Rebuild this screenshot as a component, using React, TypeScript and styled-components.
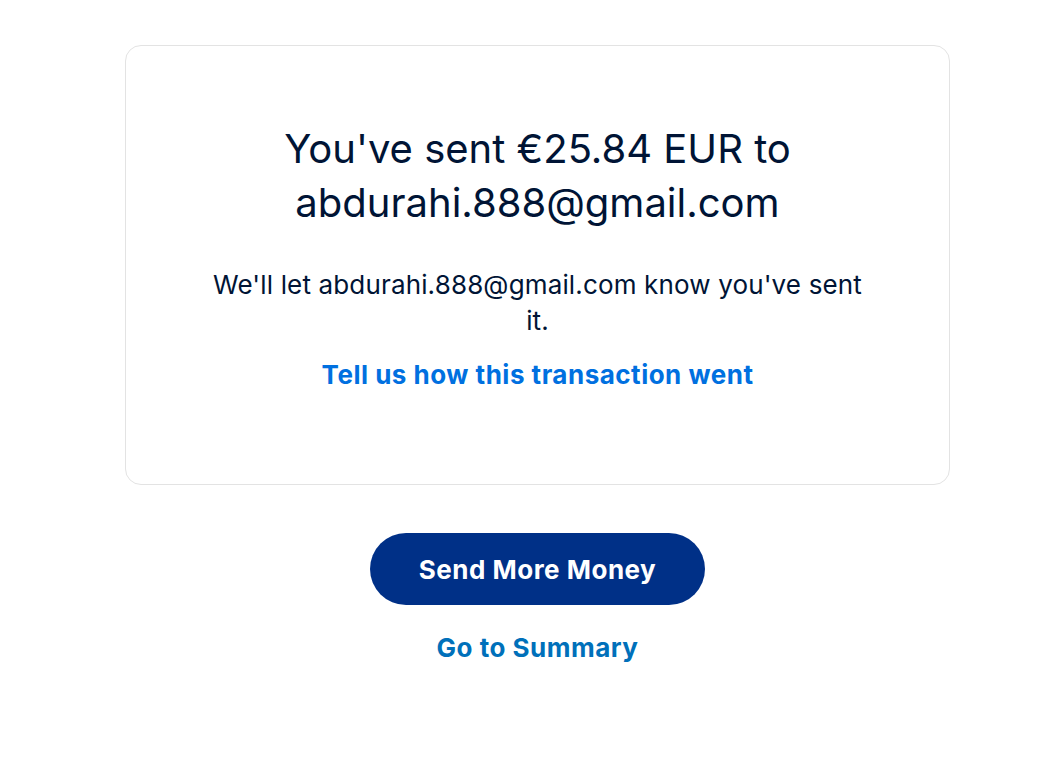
import React from 'react';
import styled, { createGlobalStyle } from 'styled-components';

const GlobalStyle = createGlobalStyle`
  body {
    margin: 0;
    background: #ffffff;
    font-family: Inter, "Noto Sans", "Liberation Sans", sans-serif;
    color: #001435;
  }
`;

const Page = styled.main`
  display: flex;
  flex-direction: column;
  align-items: center;
  padding: 45px 0 0 17px;
`;

const Card = styled.section`
  box-sizing: border-box;
  width: 825px;
  height: 440px;
  border: 1px solid #e3e3e3;
  border-radius: 16px;
  padding: 76px 80px 0;
  display: flex;
  flex-direction: column;
  align-items: center;
  text-align: center;
`;

const Title = styled.h1`
  margin: 0;
  max-width: 560px;
  font-size: 40px;
  font-weight: 400;
  line-height: 54px;
  color: #001435;
`;

const Note = styled.p`
  margin: 37px 0 0;
  max-width: 670px;
  font-size: 26px;
  letter-spacing: 0.15px;
  line-height: 36px;
  color: #001435;
`;

const TextLink = styled.a<{ $tone?: 'bright' | 'deep' }>`
  display: inline-block;
  font-size: 26px;
  font-weight: 700;
  letter-spacing: 0.5px;
  line-height: 32px;
  color: ${(p) => (p.$tone === 'deep' ? '#0070ba' : '#0070e0')};
  text-decoration: none;
  cursor: pointer;
`;

const FeedbackLink = styled(TextLink)`
  margin-top: 20px;
`;

const Actions = styled.div`
  display: flex;
  flex-direction: column;
  align-items: center;
  margin-top: 48px;
  gap: 27px;
`;

const PrimaryButton = styled.button`
  width: 335px;
  height: 72px;
  border: none;
  border-radius: 36px;
  background: #003087;
  color: #ffffff;
  font-family: inherit;
  font-size: 26px;
  font-weight: 700;
  letter-spacing: 0.5px;
  cursor: pointer;
`;

export default function App() {
  return (
    <>
      <GlobalStyle />
      <Page>
        <Card>
          <Title>You've sent €25.84 EUR to abdurahi.888@gmail.com</Title>
          <Note>We'll let abdurahi.888@gmail.com know you've sent it.</Note>
          <FeedbackLink>Tell us how this transaction went</FeedbackLink>
        </Card>
        <Actions>
          <PrimaryButton>Send More Money</PrimaryButton>
          <TextLink $tone="deep">Go to Summary</TextLink>
        </Actions>
      </Page>
    </>
  );
}
